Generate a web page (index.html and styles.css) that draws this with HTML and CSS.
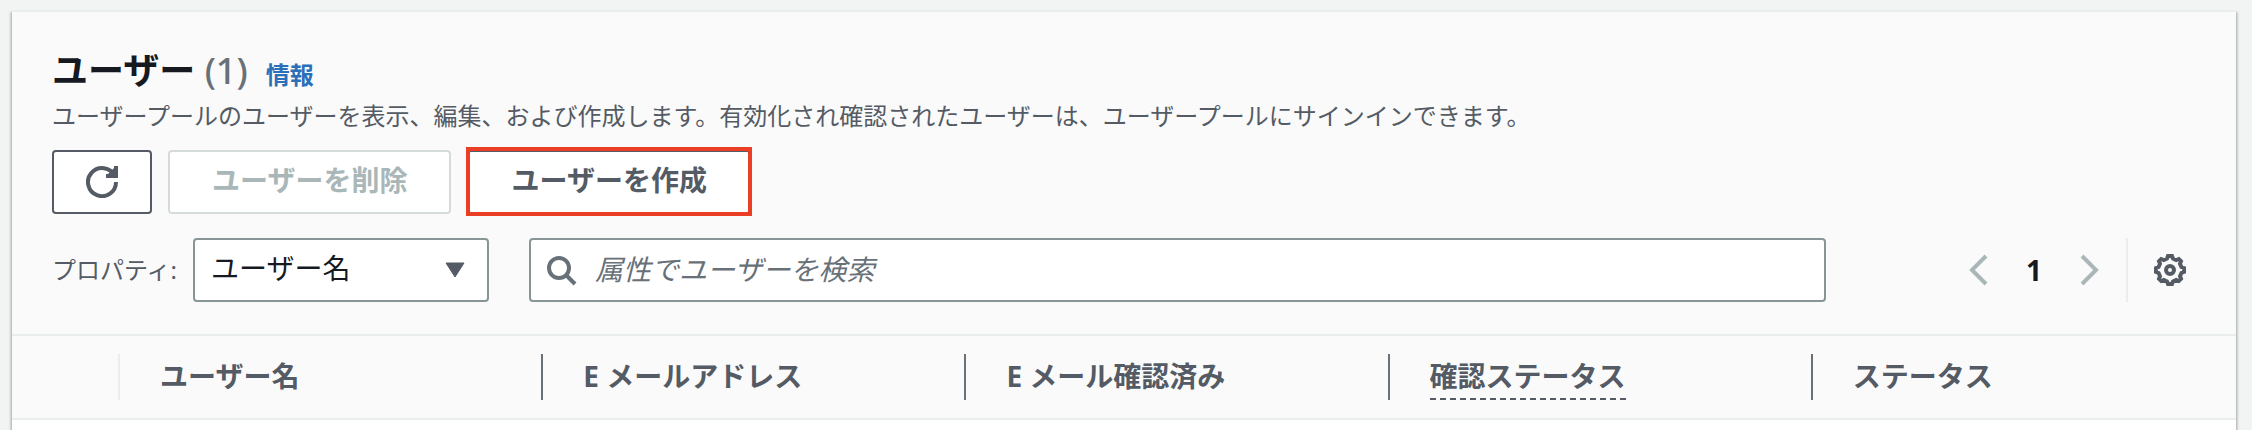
FILE: index.html
```html
<!DOCTYPE html>
<html lang="ja">
<head>
<meta charset="utf-8">
<meta name="viewport" content="width=device-width, initial-scale=1">
<title>ユーザー</title>
<link rel="stylesheet" href="styles.css">
</head>
<body>
<main class="card">
  <header class="card-header">
    <div class="heading">
      <h2 class="title">ユーザー <span class="count">(1)</span></h2>
      <a class="info" href="#">情報</a>
    </div>
    <p class="description">ユーザープールのユーザーを表示、編集、および作成します。有効化され確認されたユーザーは、ユーザープールにサインインできます。</p>
    <div class="actions">
      <button class="button button-icon" type="button" aria-label="更新">
        <svg class="icon" viewBox="0 0 16 16" aria-hidden="true"><path d="M10 5h5V0" class="solid"/><path d="M15 8a7 7 0 1 1-.7-3"/></svg>
      </button>
      <button class="button" type="button" disabled>ユーザーを削除</button>
      <button class="button button-marked" type="button">ユーザーを作成</button>
    </div>
    <div class="tools">
      <div class="property">
        <label class="property-label" for="property">プロパティ:</label>
        <div class="select-wrap">
          <select class="select" id="property"><option>ユーザー名</option></select>
          <svg class="caret" viewBox="0 0 20 16" aria-hidden="true"><path d="M1 1h18l-9 14z"/></svg>
        </div>
      </div>
      <div class="search">
        <svg class="icon search-icon" viewBox="0 0 16 16" aria-hidden="true"><circle cx="7" cy="7" r="5"/><path d="m15 15-4.500-4.500"/></svg>
        <input class="search-input" type="search" aria-label="属性でユーザーを検索" placeholder="属性でユーザーを検索">
      </div>
      <nav class="pagination" aria-label="ページ">
        <button class="plain" type="button" aria-label="前のページ" disabled><svg class="icon" viewBox="0 0 16 16" aria-hidden="true"><path d="M12 1 5 8l7 7"/></svg></button>
        <button class="plain page" type="button" aria-current="page">1</button>
        <button class="plain" type="button" aria-label="次のページ" disabled><svg class="icon" viewBox="0 0 16 16" aria-hidden="true"><path d="m4 1 7 7-7 7"/></svg></button>
      </nav>
      <div class="settings">
        <button class="plain" type="button" aria-label="設定"><svg class="icon" viewBox="0 0 16 16" aria-hidden="true"><path d="M15 9V7l-1.300-.5-.7-1.600.5-1.300-1.100-1.100-1.300.5-1.600-.7L9 1H7l-.5 1.300-1.600.7-1.300-.5-1.100 1.100.5 1.300-.7 1.600L1 7v2l1.300.5.7 1.600-.5 1.300 1.100 1.100 1.300-.5 1.600.7L7 15h2l.5-1.300 1.600-.7 1.300.5 1.100-1.100-.5-1.300.7-1.600z"/><circle cx="8" cy="8" r="2"/></svg></button>
      </div>
    </div>
  </header>
  <table class="table">
    <thead>
      <tr>
        <th class="select-col" scope="col" aria-label="選択"><div class="cell cell-light"></div></th>
        <th scope="col"><div class="cell">ユーザー名</div></th>
        <th scope="col"><div class="cell">E メールアドレス</div></th>
        <th scope="col"><div class="cell">E メール確認済み</div></th>
        <th scope="col"><div class="cell"><span class="hint">確認ステータス</span></div></th>
        <th scope="col"><div class="cell">ステータス</div></th>
      </tr>
    </thead>
  </table>
</main>
</body>
</html>
```
FILE: styles.css
```css
* {
  box-sizing: border-box;
}

body {
  margin: 0;
  height: 100vh;
  padding: 10px 16px 0 12px;
  overflow: hidden;
  background: #f2f3f3;
  color: #16191f;
  font-family: "Noto Sans", "Noto Sans CJK JP", sans-serif;
  font-size: 28px;
  line-height: 44px;
}

button,
input,
select {
  font: inherit;
}

.card {
  min-height: 100vh;
  background: #fff;
  border-top: 2px solid #eaeded;
  box-shadow: 0 2px 2px rgba(0, 28, 36, 0.3), 2px 2px 2px rgba(0, 28, 36, 0.15), -2px 2px 2px rgba(0, 28, 36, 0.15);
}

.card-header {
  padding: 36px 40px 32px;
  background: #fafafa;
  border-bottom: 2px solid #eaeded;
}

.heading {
  display: flex;
  align-items: baseline;
  gap: 18px;
}

.title {
  margin: 0;
  font-size: 36px;
  line-height: 46px;
}

.count {
  color: #687078;
  font-weight: 500;
}

.info {
  color: #2b6fb8;
  font-size: 24px;
  font-weight: 700;
  line-height: 32px;
  text-decoration: none;
}

.description {
  margin: 4px 0 16px;
  color: #545b64;
  font-size: 24px;
  line-height: 36px;
}

.actions {
  display: flex;
  gap: 16px;
}

.button {
  position: relative;
  height: 64px;
  padding: 0 42px 4px;
  border: 2px solid #545b64;
  border-radius: 4px;
  background: #fff;
  color: #545b64;
  font-weight: 700;
}

.button:disabled {
  border-color: #d5dbdb;
  color: #aab7b8;
}

.button-icon {
  padding: 0 32px;
}

.button-marked::after {
  content: "";
  position: absolute;
  inset: -5px -3px -4px;
  border: 4px solid #eb3f25;
}

.icon {
  display: block;
  width: 32px;
  height: 32px;
  fill: none;
  stroke: currentColor;
  stroke-width: 2;
}

.icon .solid {
  fill: currentColor;
}

.tools {
  display: flex;
  align-items: center;
  margin-top: 24px;
}

.property {
  display: flex;
  align-items: center;
  gap: 16px;
  margin-right: 40px;
}

.property-label {
  color: #545b64;
  font-size: 24px;
}

.select-wrap,
.search {
  position: relative;
}

.select,
.search-input {
  display: block;
  height: 64px;
  border: 2px solid #879596;
  border-radius: 4px;
  background: #fff;
  color: #16191f;
}

.select {
  width: 296px;
  padding: 0 64px 4px 16px;
  appearance: none;
}

.caret {
  position: absolute;
  top: 24px;
  right: 24px;
  width: 20px;
  height: 16px;
  fill: #545b64;
  stroke: #545b64;
  stroke-linejoin: round;
  pointer-events: none;
}

.search {
  flex: 1;
}

.search-icon {
  position: absolute;
  top: 16px;
  left: 16px;
  color: #687078;
}

.search-input {
  width: 100%;
  padding: 0 16px 2px 64px;
  appearance: none;
}

.search-input::placeholder {
  color: #687078;
  font-style: italic;
  opacity: 1;
}

.pagination {
  display: flex;
  align-items: center;
  gap: 24px;
  margin: 0 20px 0 136px;
}

.plain {
  min-width: 32px;
  padding: 0;
  border: 0;
  background: none;
  color: #545b64;
}

.plain:disabled {
  color: #aab7b8;
}

.page {
  color: #16191f;
  font-weight: 700;
}

.settings {
  display: flex;
  align-items: center;
  height: 64px;
  padding: 0 10px 0 26px;
  border-left: 2px solid #eaeded;
}

.table {
  width: 100%;
  table-layout: fixed;
  border-collapse: collapse;
  background: #fafafa;
}

.table th {
  padding: 18px 0;
  border-bottom: 2px solid #eaeded;
  color: #545b64;
  text-align: left;
}

.table .select-col {
  width: 108px;
}

.cell {
  height: 46px;
  padding-left: 40px;
  border-right: 2px solid #687078;
}

.cell-light {
  border-color: #eaeded;
}

th:last-child .cell {
  border-right: 0;
}

.hint {
  display: inline-block;
  height: 46px;
  border-bottom: 2px dashed #545b64;
}
```
